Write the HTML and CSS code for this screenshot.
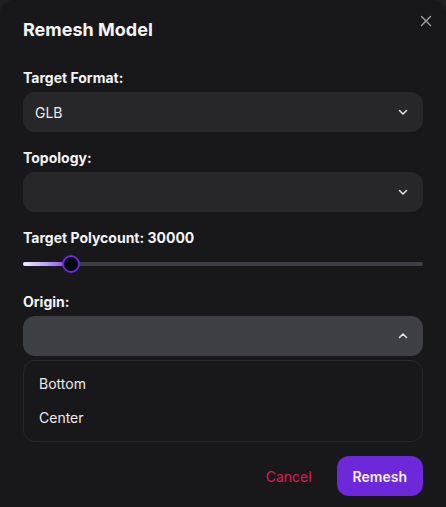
FILE: index.html
```html
<!DOCTYPE html>
<html>
<head>
<meta charset="utf-8">
<link rel="stylesheet" href="styles.css">
</head>
<body>
<div class="modal">
  <button class="close" aria-label="Close">
    <svg width="12" height="12" viewBox="0 0 12 12"><path d="M1.5 1.5 L10.5 10.5 M10.5 1.5 L1.5 10.5" stroke="#a1a1aa" stroke-width="1.4" stroke-linecap="round"/></svg>
  </button>
  <header class="header">Remesh Model</header>
  <div class="body">
    <div class="field">
      <label class="label">Target Format:</label>
      <div class="select"><span class="value">GLB</span>
        <svg class="chev" width="12" height="12" viewBox="0 0 12 12"><path d="M2.5 4.5 L6 8 L9.5 4.5" fill="none" stroke="#e4e4e7" stroke-width="1.5" stroke-linecap="round" stroke-linejoin="round"/></svg>
      </div>
    </div>
    <div class="field">
      <label class="label">Topology:</label>
      <div class="select"><span class="value"></span>
        <svg class="chev" width="12" height="12" viewBox="0 0 12 12"><path d="M2.5 4.5 L6 8 L9.5 4.5" fill="none" stroke="#e4e4e7" stroke-width="1.5" stroke-linecap="round" stroke-linejoin="round"/></svg>
      </div>
    </div>
    <div class="field">
      <label class="label">Target Polycount: 30000</label>
      <div class="slider">
        <div class="track"><div class="fill"></div></div>
        <div class="thumb"></div>
      </div>
    </div>
    <div class="field origin">
      <label class="label">Origin:</label>
      <div class="select open"><span class="value"></span>
        <svg class="chev" width="12" height="12" viewBox="0 0 12 12"><path d="M2.5 7.5 L6 4 L9.5 7.5" fill="none" stroke="#e4e4e7" stroke-width="1.5" stroke-linecap="round" stroke-linejoin="round"/></svg>
      </div>
      <ul class="listbox">
        <li class="item">Bottom</li>
        <li class="item">Center</li>
      </ul>
    </div>
  </div>
  <footer class="footer">
    <button class="btn cancel">Cancel</button>
    <button class="btn primary">Remesh</button>
  </footer>
</div>
</body>
</html>
```
FILE: styles.css
```css
html, body {
  margin: 0;
  padding: 0;
  background: #1f1f22;
  font-family: Inter, "Noto Sans", sans-serif;
}
.modal {
  position: relative;
  width: 446px;
  height: 507px;
  box-sizing: border-box;
  background: #18181b;
  border-radius: 14px 14px 0 0;
  display: flex;
  flex-direction: column;
  color: #ececee;
}
.close {
  position: absolute;
  top: 8px;
  right: 7px;
  width: 26px;
  height: 26px;
  border: none;
  background: transparent;
  display: flex;
  align-items: center;
  justify-content: center;
  padding: 0;
}
.header {
  padding: 16px 23px;
  font-size: 18px;
  line-height: 28px;
  font-weight: 700;
  color: #f4f4f5;
}
.body {
  padding: 8px 23px 0;
  display: flex;
  flex-direction: column;
  gap: 16px;
}
.field {
  display: flex;
  flex-direction: column;
  gap: 4px;
}
.label {
  font-size: 14px;
  line-height: 20px;
  font-weight: 700;
  color: #f4f4f5;
}
.select {
  height: 40px;
  border-radius: 12px;
  background: #27272a;
  display: flex;
  align-items: center;
  justify-content: space-between;
  padding: 0 14px 0 12px;
}
.select.open {
  background: #3f3f46;
}
.value {
  font-size: 14px;
  color: #ececee;
}
.slider {
  position: relative;
  height: 24px;
  display: flex;
  align-items: center;
}
.track {
  width: 100%;
  height: 4px;
  border-radius: 2px;
  background: #3f3f46;
  overflow: hidden;
}
.fill {
  width: 48px;
  height: 100%;
  background: linear-gradient(90deg, #f5f0ff 0%, #a98af0 60%, #7c3aed 100%);
}
.thumb {
  position: absolute;
  left: 39px;
  top: 2.5px;
  width: 14px;
  height: 14px;
  border-radius: 50%;
  border: 2.5px solid #6d28d9;
  background: #030712;
}
.listbox {
  list-style: none;
  margin: 0;
  padding: 6px 5px;
  border: 1px solid #27272a;
  border-radius: 12px;
  background: #18181b;
}
.item {
  height: 34px;
  line-height: 34px;
  padding: 0 10px;
  font-size: 14px;
  color: #ececee;
}
.footer {
  margin-top: auto;
  padding: 0 23px 11px;
  display: flex;
  justify-content: flex-end;
  gap: 9px;
}
.btn {
  height: 40px;
  border: none;
  border-radius: 12px;
  padding: 0 16px;
  font-family: inherit;
  font-size: 14px;
}
.cancel {
  background: transparent;
  color: #e0195a;
}
.primary {
  background: #6d28d9;
  color: #f4f4f5;
  font-weight: 600;
}
```
